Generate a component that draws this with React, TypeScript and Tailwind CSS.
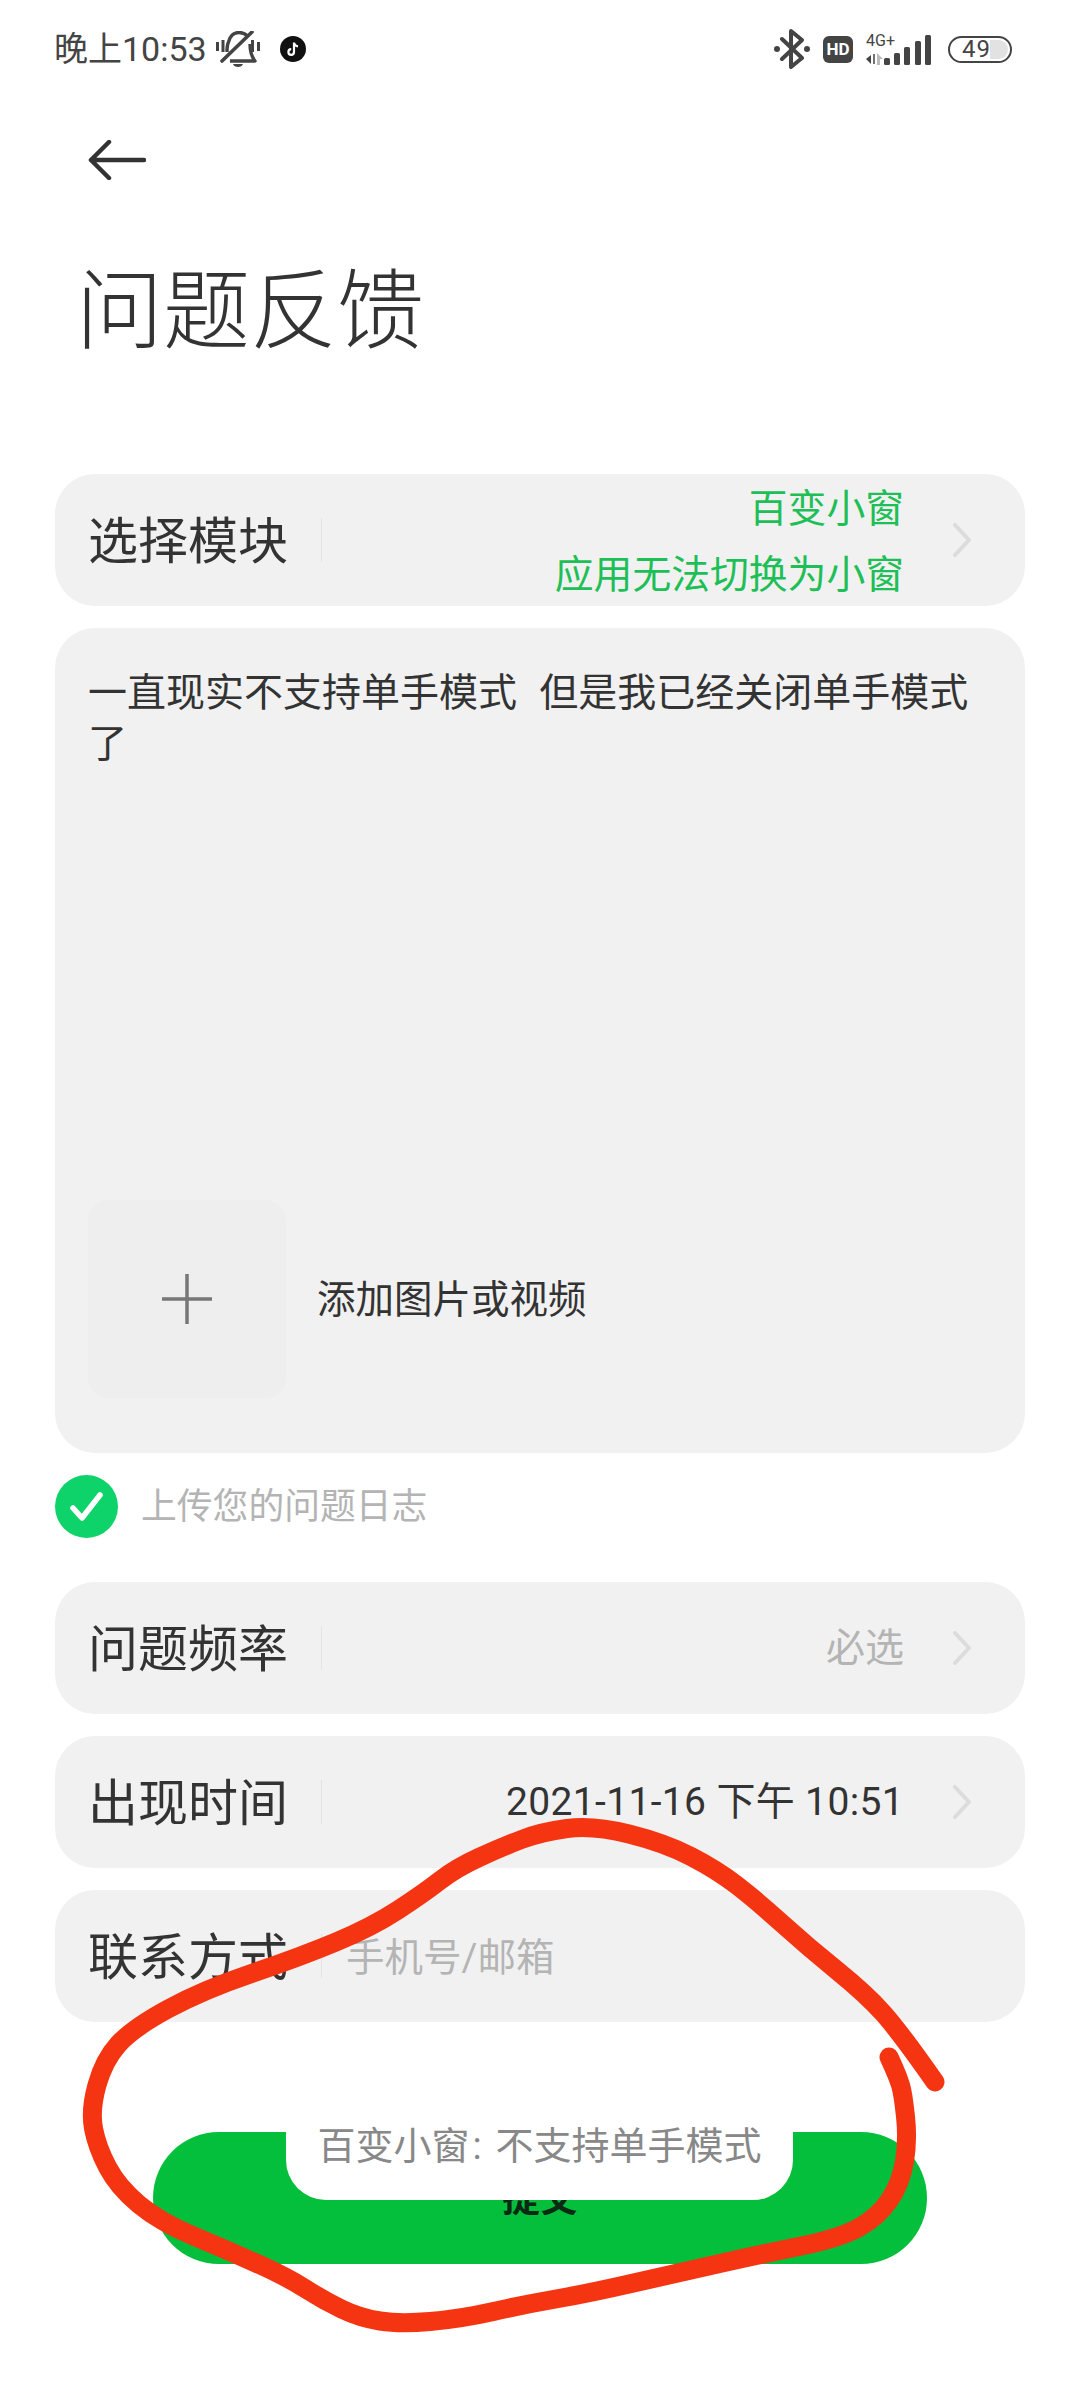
import { ReactNode } from 'react';

// hand-traced pen mark over the toast, in page pixels
const scribble: [number, number][] = [
  [935, 2082], [900, 2032], [866, 1994], [808, 1947], [756, 1900], [717, 1870], [665, 1843], [593, 1825],
  [541, 1832], [502, 1847], [456, 1868], [424, 1893], [372, 1927], [300, 1957], [203, 1990], [133, 2028],
  [104, 2060], [90, 2110], [97, 2147], [118, 2187], [160, 2222], [227, 2250], [287, 2277], [323, 2300],
  [360, 2318], [400, 2324], [460, 2319], [527, 2304], [590, 2293], [677, 2273], [767, 2253], [840, 2238],
  [878, 2217], [901, 2183], [908, 2140], [903, 2093], [898, 2077], [889, 2057],
];

function smoothPath(pts: [number, number][]) {
  let d = `M${pts[0][0]} ${pts[0][1]}`;
  for (let i = 1; i < pts.length - 1; i++) {
    const mx = (pts[i][0] + pts[i + 1][0]) / 2;
    const my = (pts[i][1] + pts[i + 1][1]) / 2;
    d += ` Q${pts[i][0]} ${pts[i][1]} ${mx} ${my}`;
  }
  const last = pts[pts.length - 1];
  return d + ` L${last[0]} ${last[1]}`;
}

function Chevron() {
  return (
    <svg width="20" height="34" viewBox="0 0 20 34" fill="none" className="shrink-0">
      <path d="M3 2 L17 17 L3 32" stroke="#dcdcdc" strokeWidth="4" strokeLinecap="round" strokeLinejoin="round" />
    </svg>
  );
}

function Row({ label, children, plain }: { label: string; children?: ReactNode; plain?: boolean }) {
  return (
    <div className="flex h-[132px] items-center rounded-[40px] bg-[#f1f1f1] pl-[33px] pr-[53px]">
      <span className="w-[200px] shrink-0 pt-[3px] text-[50px] leading-none whitespace-nowrap text-[#333333]">{label}</span>
      <div className="ml-[33px] h-[44px] w-px shrink-0 bg-[#e2e2e2]" />
      {plain ? (
        <div className="ml-[24px] flex-1 pt-[3px] text-[38.5px] text-[#b4b4b4]">{children}</div>
      ) : (
        <>
          <div className="flex-1 pt-[1px] text-right">{children}</div>
          <div className="ml-[48px]"><Chevron /></div>
        </>
      )}
    </div>
  );
}

function StatusLeft() {
  return (
    <div className="flex items-center">
      <span className="w-[152px] text-[34px] leading-none whitespace-nowrap text-[#444444]">晚上10:53</span>
      <svg width="44" height="36" viewBox="0 0 44 36" fill="none" className="ml-[10px]">
        <path d="M1.500 11v9M7 9v12M36.500 9v12M42.500 11v9" stroke="#444" strokeWidth="3" />
        <path d="M11 21c0-3 0-7 1.500-10C14 5 18 1.500 23 1.500c3 0 6 1 8 3M34 13c0 7 1 12 5 17H14" stroke="#444" strokeWidth="3.400" strokeLinejoin="round" />
        <path d="M6 30 36 1" stroke="#444" strokeWidth="3.600" strokeLinecap="round" />
        <path d="M17 33h10c-1 4-9 4-10 0Z" fill="#444" />
      </svg>
      <svg width="26" height="26" viewBox="0 0 26 26" className="ml-[20px]">
        <circle cx="13" cy="13" r="13" fill="#111" />
        <path d="M14 6.500v9.500a2.800 2.800 0 1 1-2.800-2.800M14 7c.5 2 2 3.200 4 3.400" stroke="#fff" strokeWidth="2.200" fill="none" />
      </svg>
    </div>
  );
}

function StatusRight() {
  return (
    <div className="flex items-center">
      <svg width="36" height="40" viewBox="0 0 36 40" fill="none">
        <path d="M8 10 28 29 17 38V2l11 9L8 30" stroke="#444" strokeWidth="4" strokeLinejoin="round" strokeLinecap="round" />
        <circle cx="3" cy="20" r="3" fill="#444" />
        <circle cx="33" cy="20" r="3" fill="#444" />
      </svg>
      <div className="ml-[13px] flex h-[27px] w-[30px] items-center justify-center rounded-[6px] bg-[#444444] text-[17px] leading-none font-bold text-white">HD</div>
      <div className="ml-[13px] flex w-[66px] flex-col">
        <span className="text-[16px] leading-[14px] text-[#444444]">4G+</span>
        <svg width="66" height="30" viewBox="0 0 66 30" className="-mt-[13px]">
          <path d="M0 24l5-4v9Z" fill="#444" />
          <path d="M8 19v10" stroke="#444" strokeWidth="1.500" />
          <path d="M11 18l6 6h-3v6h-3Z" fill="#bbb" />
          <rect x="18" y="23" width="6" height="7" rx="1.500" fill="#444" />
          <rect x="28" y="18" width="6" height="12" rx="1.500" fill="#444" />
          <rect x="38" y="12" width="6" height="18" rx="1.500" fill="#444" />
          <rect x="49" y="6" width="6" height="24" rx="1.500" fill="#444" />
          <rect x="59" y="0" width="6" height="30" rx="1.500" fill="#444" />
        </svg>
      </div>
      <div className="relative ml-[16px] flex h-[27px] w-[64px] items-center rounded-full border-[2.500px] border-[#444444] pl-[12px]">
        <span className="absolute top-[2px] right-[2px] bottom-[2px] w-[18px] rounded-r-full bg-[#e2e2e2]" />
        <span className="relative text-[24px] leading-none tracking-[1px] text-[#444444]">49</span>
      </div>
    </div>
  );
}

export default function App() {
  return (
    <div className="relative h-[2400px] w-[1080px] overflow-hidden bg-white font-['Roboto','Noto_Sans_CJK_SC',sans-serif]">
      <div className="flex h-[98px] items-center justify-between pr-[68px] pl-[54px]">
        <StatusLeft />
        <StatusRight />
      </div>

      <div className="flex h-[124px] items-center pl-[88px]">
        <svg width="58" height="40" viewBox="0 0 58 40" fill="none">
          <path d="M21 2 3 20l18 18M3 20h53" stroke="#333" strokeWidth="4.500" strokeLinecap="round" strokeLinejoin="round" />
        </svg>
      </div>

      <h1 className="flex h-[170px] items-center pt-[10px] pl-[76px] text-[87px] leading-none font-light text-[#333333]">问题反馈</h1>

      <div className="mt-[82px] flex flex-col gap-[22px] px-[55px]">
        <Row label="选择模块">
          <div className="pt-[2px] text-[38.8px] leading-[66px] text-[#1dbf56]">
            <div>百变小窗</div>
            <div>应用无法切换为小窗</div>
          </div>
        </Row>

        <div className="flex h-[825px] flex-col justify-between rounded-[40px] bg-[#f1f1f1] pt-[40px] pr-[40px] pb-[55px] pl-[33px]">
          <p className="text-[39px] leading-[51px] [word-spacing:1.5px] whitespace-pre-wrap text-[#333333]">一直现实不支持单手模式  但是我已经关闭单手模式了</p>
          <div className="flex items-center">
            <div className="flex h-[198px] w-[198px] items-center justify-center rounded-[20px] bg-[#eeeeee]">
              <svg width="50" height="50" viewBox="0 0 50 50">
                <path d="M25 0v50M0 25h50" stroke="#777" strokeWidth="3.500" />
              </svg>
            </div>
            <span className="ml-[31px] pt-[3px] text-[38.5px] leading-none text-[#333333]">添加图片或视频</span>
          </div>
        </div>

        <div className="flex h-[63px] items-center">
          <div className="flex h-[63px] w-[63px] items-center justify-center rounded-full bg-[#0ed36a]">
            <svg width="34" height="30" viewBox="0 0 34 30" fill="none">
              <path d="M3 16 12 26 30 3" stroke="#fff" strokeWidth="5.500" strokeLinecap="round" strokeLinejoin="round" />
            </svg>
          </div>
          <span className="ml-[23px] pt-[2px] text-[35.8px] leading-none text-[#b4b4b4]">上传您的问题日志</span>
        </div>

        <div className="mt-[22px]">
          <Row label="问题频率">
            <span className="text-[39px] leading-none text-[#b4b4b4]">必选</span>
          </Row>
        </div>
        <Row label="出现时间">
          <span className="text-[39px] leading-none tracking-[0.35px] text-[#333333]">2021-11-16 下午 10:51</span>
        </Row>
        <Row label="联系方式" plain>手机号/邮箱</Row>
      </div>

      <div className="mx-auto mt-[110px] flex h-[132px] w-[774px] items-center justify-center rounded-[66px] bg-[#04bf3b] text-[38px] font-bold text-[#0a2a14]">提交</div>

      {/* toast sits above the button */}
      <div className="absolute top-[2092px] left-[286px] flex h-[108px] w-[507px] items-center justify-center rounded-[40px] bg-white text-[38px] leading-none whitespace-nowrap text-[#888888]">
        百变小窗<span className="mr-[14px] ml-[3px]">:</span>不支持单手模式
      </div>

      <svg width="1080" height="2400" viewBox="0 0 1080 2400" fill="none" className="pointer-events-none absolute top-0 left-0">
        <path d={smoothPath(scribble)} stroke="#f53512" strokeWidth="19" strokeLinecap="round" strokeLinejoin="round" />
      </svg>
    </div>
  );
}
